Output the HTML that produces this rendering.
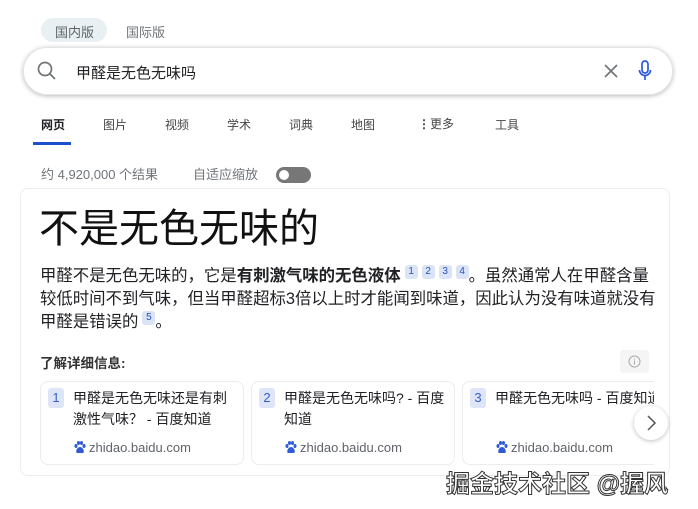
<!DOCTYPE html>
<html><head><meta charset="utf-8"><style>
*{margin:0;padding:0;box-sizing:border-box}
body{width:698px;height:509px;overflow:hidden;background:#fff;font-family:"Liberation Sans","Noto Sans CJK SC",sans-serif;color:#202124;position:relative}
.a{position:absolute;white-space:nowrap}
.sup{display:inline-block;background:#dbe3f7;color:#2851b8;font-size:10px;width:13px;height:14px;line-height:14px;text-align:center;border-radius:3px;vertical-align:7px;margin-left:4px}
.card{position:absolute;top:381px;width:204px;height:84px;border:1px solid #ececec;border-radius:8px;overflow:hidden}
.num{position:absolute;left:7px;top:6px;width:16px;height:20px;background:#dfe5f8;color:#3360c6;border-radius:3px;font-size:13px;text-align:center;line-height:20px}
.t{position:absolute;left:32px;top:6px;font-size:14px;line-height:21px;color:#202124;width:166px;white-space:normal}
.d{position:absolute;left:33px;top:58px;font-size:13px;color:#5f6368;white-space:nowrap}
.d svg{vertical-align:-2px;margin-right:3px}
</style></head><body>
<div class="a" style="left:41px;top:18px;width:66px;height:24px;border-radius:12px;background:#e8f0f3"></div>
<div class="a" style="left:55px;top:22px;font-size:13px;color:#5f6368">国内版</div>
<div class="a" style="left:126px;top:22px;font-size:13px;color:#70757a">国际版</div>
<div class="a" style="left:23px;top:47px;width:650px;height:48px;border-radius:24px;box-shadow:0 1px 5px rgba(0,0,0,.28);border:1px solid #e4e4e4"></div>
<svg class="a" style="left:36px;top:60px" width="22" height="22" viewBox="0 0 22 22"><circle cx="9" cy="9" r="6.5" fill="none" stroke="#70757a" stroke-width="1.7"/><line x1="13.8" y1="13.8" x2="19" y2="19" stroke="#70757a" stroke-width="1.8"/></svg>
<div class="a" style="left:76px;top:62px;font-size:15px;color:#202124">甲醛是无色无味吗</div>
<svg class="a" style="left:604px;top:64px" width="14" height="14"><path d="M1 1L13 13M13 1L1 13" stroke="#70757a" stroke-width="1.7"/></svg>
<svg class="a" style="left:638px;top:60px" width="14" height="22" viewBox="0 0 14 22"><rect x="4" y="1" width="6" height="12" rx="3" fill="none" stroke="#2a5bd7" stroke-width="1.7"/><path d="M1.5 10a5.5 5.5 0 0 0 11 0M7 15.5V20" fill="none" stroke="#2a5bd7" stroke-width="1.7"/></svg>
<div class="a" style="left:41px;top:116px;font-size:12px;color:#202124;font-weight:bold">网页</div>
<div class="a" style="left:103px;top:116px;font-size:12px;color:#444">图片</div>
<div class="a" style="left:165px;top:116px;font-size:12px;color:#444">视频</div>
<div class="a" style="left:227px;top:116px;font-size:12px;color:#444">学术</div>
<div class="a" style="left:289px;top:116px;font-size:12px;color:#444">词典</div>
<div class="a" style="left:351px;top:116px;font-size:12px;color:#444">地图</div>
<div class="a" style="left:418px;top:115px;font-size:12px;color:#444"><b>⋮</b>更多</div>
<div class="a" style="left:495px;top:116px;font-size:12px;color:#444">工具</div>
<div class="a" style="left:33px;top:142px;width:38px;height:3px;background:#1a4fd0"></div>
<div class="a" style="left:41px;top:164px;font-size:13px;color:#70757a">约 4,920,000 个结果</div>
<div class="a" style="left:193px;top:164px;font-size:13px;color:#70757a">自适应缩放</div>
<div class="a" style="left:276px;top:167px;width:35px;height:16px;border-radius:8px;background:#777"></div>
<div class="a" style="left:279px;top:170px;width:10px;height:10px;border-radius:5px;background:#fff"></div>
<div class="a" style="left:20px;top:188px;width:650px;height:288px;border:1px solid #ededed;border-radius:8px"></div>
<div class="a" style="left:39px;top:203px;font-size:40px;line-height:52px;color:#111">不是无色无味的</div>
<div class="a" style="left:40px;top:265px;width:622px;font-size:16.4px;line-height:23px;white-space:normal;color:#202124">甲醛不是无色无味的，它是<b>有刺激气味的无色液体</b><span class="sup">1</span><span class="sup">2</span><span class="sup">3</span><span class="sup">4</span>。虽然通常人在甲醛含量较低时间不到气味，但当甲醛超标3倍以上时才能闻到味道，因此认为没有味道就没有甲醛是错误的<span class="sup">5</span>。</div>
<div class="a" style="left:40px;top:352px;font-size:13.5px;font-weight:bold;color:#333">了解详细信息:</div>
<div class="a" style="left:620px;top:350px;width:29px;height:23px;background:#f5f5f5;border-radius:3px"></div>
<svg class="a" style="left:628px;top:355px" width="13" height="13"><circle cx="6.5" cy="6.5" r="5.5" fill="none" stroke="#aaa"/><path d="M6.5 5.5v4M6.5 3.5v1" stroke="#aaa"/></svg>
<div class="card" style="left:40px"><div class="num">1</div><div class="t">甲醛是无色无味还是有刺激性气味？ - 百度知道</div><div class="d"><svg width="12" height="13" viewBox="0 0 12 13"><g fill="#2f5bd8"><ellipse cx="2" cy="5" rx="1.5" ry="2"/><ellipse cx="4.5" cy="2" rx="1.5" ry="2"/><ellipse cx="7.5" cy="2" rx="1.5" ry="2"/><ellipse cx="10" cy="5" rx="1.5" ry="2"/><path d="M6 6c-3 0-5 5-3 6h6c2-1 0-6-3-6z"/></g></svg>zhidao.baidu.com</div></div>
<div class="card" style="left:251px"><div class="num">2</div><div class="t">甲醛是无色无味吗?&nbsp;-&nbsp;百度<br>知道</div><div class="d"><svg width="12" height="13" viewBox="0 0 12 13"><g fill="#2f5bd8"><ellipse cx="2" cy="5" rx="1.5" ry="2"/><ellipse cx="4.5" cy="2" rx="1.5" ry="2"/><ellipse cx="7.5" cy="2" rx="1.5" ry="2"/><ellipse cx="10" cy="5" rx="1.5" ry="2"/><path d="M6 6c-3 0-5 5-3 6h6c2-1 0-6-3-6z"/></g></svg>zhidao.baidu.com</div></div>
<div class="card" style="left:462px;width:192px;border-right:none;border-radius:8px 0 0 8px"><div class="num">3</div><div class="t" style="width:220px;white-space:nowrap">甲醛无色无味吗 - 百度知道</div><div class="d"><svg width="12" height="13" viewBox="0 0 12 13"><g fill="#2f5bd8"><ellipse cx="2" cy="5" rx="1.5" ry="2"/><ellipse cx="4.5" cy="2" rx="1.5" ry="2"/><ellipse cx="7.5" cy="2" rx="1.5" ry="2"/><ellipse cx="10" cy="5" rx="1.5" ry="2"/><path d="M6 6c-3 0-5 5-3 6h6c2-1 0-6-3-6z"/></g></svg>zhidao.baidu.com</div></div>
<div class="a" style="left:634px;top:406px;width:34px;height:34px;border-radius:17px;background:#fff;box-shadow:0 1px 4px rgba(0,0,0,.25)"></div>
<svg class="a" style="left:645px;top:414px" width="12" height="18"><path d="M3 2l7 7-7 7" fill="none" stroke="#555" stroke-width="1.5"/></svg>
<div class="a" style="left:446px;top:464px;font-size:24px;color:#fff;-webkit-text-stroke:1px #333;font-weight:bold">掘金技术社区 @握风</div>
</body></html>
